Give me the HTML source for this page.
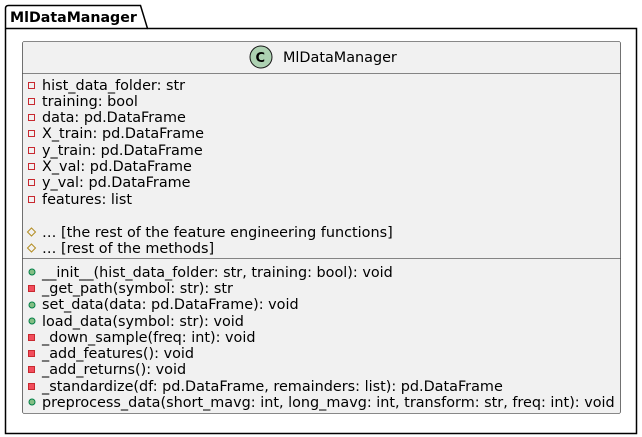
<!DOCTYPE html>
<html><head><meta charset="utf-8"><style>
html,body{margin:0;padding:0;background:#fff;width:642px;height:437px;overflow:hidden}
svg text{font-family:"DejaVu Sans","Liberation Sans",sans-serif;font-size:14.4px;fill:#000}
</style></head><body>
<svg width="642" height="437" xmlns="http://www.w3.org/2000/svg">
<path d="M8.5,5.5 L140.5,5.5 L147.5,28.5 L636.5,28.5 L636.5,433.5 L5.5,433.5 L5.5,8.5 Q5.5,5.5 8.5,5.5 Z" fill="none" stroke="#000" stroke-width="1.5"/>
<line x1="5.5" y1="28.5" x2="147.5" y2="28.5" stroke="#000" stroke-width="1.5"/>
<text x="10" y="22" style="font-weight:bold;font-size:14.2px">MlDataManager</text>
<rect x="22.5" y="41.5" width="598" height="372" rx="2" fill="#f1f1f1" stroke="#181818" stroke-width="0.6"/>
<line x1="22.5" y1="73.5" x2="620.5" y2="73.5" stroke="#181818" stroke-width="0.6"/>
<line x1="22.5" y1="258.5" x2="620.5" y2="258.5" stroke="#181818" stroke-width="0.6"/>
<circle cx="261" cy="57" r="11" fill="#add1b2" stroke="#181818" stroke-width="1"/>
<text x="255.5" y="62" style="font-weight:bold;font-size:13px">C</text>
<text x="283" y="62">MlDataManager</text>
<g fill="none" stroke="#c82930" stroke-width="1">
<rect x="28.5" y="82.5" width="6" height="6"/><rect x="28.5" y="98.5" width="6" height="6"/>
<rect x="28.5" y="114.5" width="6" height="6"/><rect x="28.5" y="130.5" width="6" height="6"/>
<rect x="28.5" y="147.5" width="6" height="6"/><rect x="28.5" y="163.5" width="6" height="6"/>
<rect x="28.5" y="179.5" width="6" height="6"/><rect x="28.5" y="196.5" width="6" height="6"/>
</g>
<g fill="none" stroke="#b38d22" stroke-width="1">
<path d="M31.5,228 L35.5,232 L31.5,236 L27.5,232 Z"/><path d="M31.5,244 L35.5,248 L31.5,252 L27.5,248 Z"/>
</g>
<g fill="#84be84" stroke="#038048" stroke-width="1">
<circle cx="32" cy="272" r="3"/><circle cx="32" cy="305" r="3"/><circle cx="32" cy="321" r="3"/><circle cx="32" cy="402" r="3"/>
</g>
<g fill="#f24d5c" stroke="#c82930" stroke-width="1">
<rect x="28.5" y="285.5" width="6" height="6"/><rect x="28.5" y="334.5" width="6" height="6"/>
<rect x="28.5" y="350.5" width="6" height="6"/><rect x="28.5" y="366.5" width="6" height="6"/>
<rect x="28.5" y="383.5" width="6" height="6"/>
</g>
<g>
<text x="42" y="90">hist_data_folder: str</text>
<text x="42" y="106">training: bool</text>
<text x="42" y="122">data: pd.DataFrame</text>
<text x="42" y="138">X_train: pd.DataFrame</text>
<text x="42" y="155">y_train: pd.DataFrame</text>
<text x="42" y="171">X_val: pd.DataFrame</text>
<text x="42" y="187">y_val: pd.DataFrame</text>
<text x="42" y="204">features: list</text>
<text x="42" y="237">… [the rest of the feature engineering functions]</text>
<text x="42" y="253">… [rest of the methods]</text>
<text x="42" y="277">__init__(hist_data_folder: str, training: bool): void</text>
<text x="42" y="293">_get_path(symbol: str): str</text>
<text x="42" y="309">set_data(data: pd.DataFrame): void</text>
<text x="42" y="326">load_data(symbol: str): void</text>
<text x="42" y="342">_down_sample(freq: int): void</text>
<text x="42" y="358">_add_features(): void</text>
<text x="42" y="374">_add_returns(): void</text>
<text x="42" y="391">_standardize(df: pd.DataFrame, remainders: list): pd.DataFrame</text>
<text x="42" y="407">preprocess_data(short_mavg: int, long_mavg: int, transform: str, freq: int): void</text>
</g>
</svg>
</body></html>
